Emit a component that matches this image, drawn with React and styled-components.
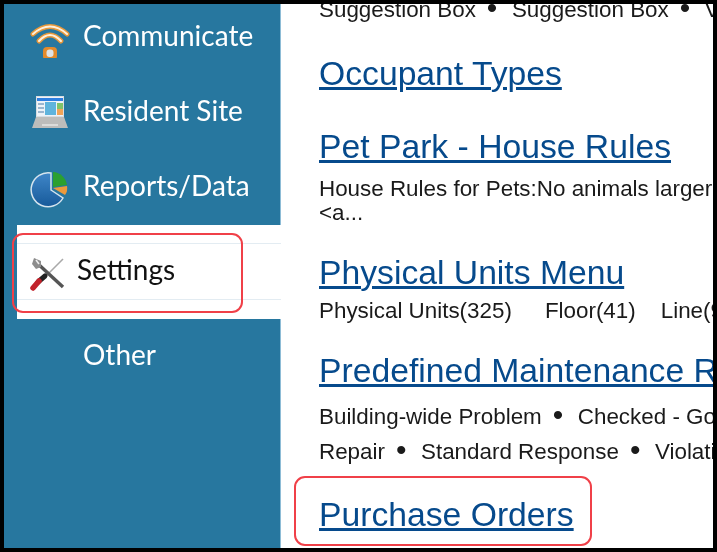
import React from 'react';
import styled, { createGlobalStyle } from 'styled-components';

const GlobalStyle = createGlobalStyle`
  html, body {
    margin: 0;
    padding: 0;
    background: #000;
  }
`;

const Frame = styled.div`
  width: 717px;
  height: 552px;
  box-sizing: border-box;
  padding: 4px;
  background: #000;
  overflow: hidden;
`;

const Screen = styled.div`
  position: relative;
  display: flex;
  height: 100%;
  overflow: hidden;
  background: #fff;
`;

const Sidebar = styled.nav`
  flex: 0 0 276px;
  background: #27779f;
  font-family: Lato, "Open Sans", sans-serif;
  position: relative;
  z-index: 1;
`;

const NavList = styled.div`
  display: flex;
  flex-direction: column;
  margin-top: -4px;
`;

const NavRow = styled.div`
  display: flex;
  align-items: center;
  height: 75px;
  padding-left: 26px;
  gap: 13px;
  color: #fff;
  font-size: 28px;
  filter: blur(0.4px);
`;

const NavLabel = styled.span`
  margin-bottom: 6px;
`;

const ActiveRow = styled.div`
  height: 94px;
  margin-left: 13px;
  margin-right: -1px;
  box-sizing: border-box;
  padding: 18px 0 19px;
  background: #fff;
`;

const ActiveInner = styled.div`
  display: flex;
  align-items: center;
  height: 100%;
  box-sizing: border-box;
  padding-left: 13px;
  gap: 7px;
  color: #111;
  font-size: 28px;
  border-top: 1px solid #e3ecf2;
  border-bottom: 1px solid #e3ecf2;
  filter: blur(0.4px);
`;

const IconBox = styled.svg`
  flex: 0 0 40px;
  width: 40px;
  height: 40px;
  margin-top: ${(p) => p.$shift || 0}px;
  filter: blur(0.6px);
`;

const Callout = styled.div`
  position: absolute;
  left: 8px;
  top: 229px;
  width: 231px;
  height: 80px;
  box-sizing: border-box;
  border: 2px solid #f04048;
  border-radius: 11px;
  z-index: 2;
`;

const Content = styled.main`
  flex: 1;
  min-width: 0;
  border-left: 1px solid #8dbcd6;
  padding-left: 38px;
  overflow: hidden;
  font-family: "Liberation Sans", Arial, sans-serif;
  color: #1a1a1a;
  filter: blur(0.4px);
`;

const Scroller = styled.div`
  margin-top: -7px;
`;

const Entry = styled.section`
  margin-bottom: ${(p) => p.$after || 0}px;
`;

const Title = styled.a`
  display: block;
  font-size: 33.7px;
  line-height: 40px;
  color: #064a8c;
  text-decoration: underline;
  text-decoration-thickness: 3px;
  white-space: nowrap;
`;

const Line = styled.div`
  margin-top: ${(p) => p.$top || 0}px;
  font-size: 22.4px;
  line-height: ${(p) => p.$height || 24}px;
  white-space: nowrap;
`;

const Dot = styled.span`
  margin: 0 14.5px 0 11px;
  font-size: 30px;
  line-height: 0;
  vertical-align: -1px;
`;

const Gap = styled.span`
  display: inline-block;
  width: ${(p) => p.$width}px;
`;

const HighlightedTitle = styled.div`
  display: inline-block;
  margin: 7.5px 0 0 -25px;
  padding: 16px 16px 10px 23px;
  border: 2px solid #f04048;
  border-radius: 11px;
`;

const WifiIcon = () => (
  <IconBox viewBox="0 0 40 40">
    <path d="M3 16 Q20 1 37 16" fill="none" stroke="#e8983a" strokeWidth="5" strokeLinecap="round" />
    <path d="M3 16 Q20 1 37 16" fill="none" stroke="#fdf0dc" strokeWidth="2" strokeLinecap="round" />
    <path d="M9 23 Q20 11 31 23" fill="none" stroke="#e8983a" strokeWidth="5" strokeLinecap="round" />
    <path d="M9 23 Q20 11 31 23" fill="none" stroke="#fdf0dc" strokeWidth="2" strokeLinecap="round" />
    <rect x="13" y="29" width="14" height="13" rx="4" fill="#e38a2b" />
    <rect x="16.5" y="31.5" width="7" height="7.5" rx="3" fill="#dfe3e6" />
  </IconBox>
);

const LaptopIcon = () => (
  <IconBox viewBox="0 0 40 40" $shift={-5}>
    <rect x="6" y="6" width="28" height="21" fill="#d8dde2" />
    <rect x="7" y="7" width="26" height="19" fill="#eef3f8" />
    <rect x="7" y="8" width="26" height="3" fill="#2f7fe0" />
    <rect x="15" y="12" width="11" height="13" fill="#5fb4dd" />
    <rect x="27" y="13" width="6" height="6" fill="#7fc46a" />
    <rect x="27" y="19" width="6" height="6" fill="#f0a458" />
    <rect x="8" y="13" width="6" height="2" fill="#9db7cf" />
    <rect x="8" y="17" width="6" height="2" fill="#9db7cf" />
    <rect x="8" y="21" width="6" height="2" fill="#9db7cf" />
    <path d="M6 27 L34 27 L38 38 L2 38 Z" fill="#bdbdbb" />
    <rect x="12" y="34" width="16" height="2" fill="#dcdcda" />
  </IconBox>
);

const PieIcon = () => (
  <IconBox viewBox="0 0 40 40" $shift={5}>
    <defs>
      <linearGradient id="pieBlue" x1="0" y1="0" x2="0" y2="1">
        <stop offset="0" stopColor="#3f86c8" />
        <stop offset="1" stopColor="#175a9a" />
      </linearGradient>
    </defs>
    <path d="M21 20 L33 28 A17 17 0 1 1 21 3 Z" fill="url(#pieBlue)" stroke="#d5e4ee" strokeWidth="1.5" />
    <path d="M23 17 L23 2 A15 15 0 0 1 37 15 Z" fill="#2ba02f" />
    <path d="M23 18 L37 16 Q38 21 35 25 Z" fill="#ec9a3c" />
  </IconBox>
);

const ToolsIcon = () => (
  <IconBox viewBox="0 0 40 40" $shift={7}>
    <path d="M33 4 L15 22" stroke="#a9a9a9" strokeWidth="1.6" />
    <path d="M7 8 L33 32" stroke="#555" strokeWidth="3.4" />
    <path d="M4 3 L11 6 L11 12 L6 14 L2 9 Z" fill="#8d8d8d" />
    <path d="M6 5 L9 9" stroke="#eee" strokeWidth="1.6" />
    <path d="M15 21 L8 27" stroke="#222" strokeWidth="5" strokeLinecap="round" />
    <path d="M9 26 L3 33" stroke="#c2222b" strokeWidth="5.5" strokeLinecap="round" />
  </IconBox>
);

export default function App() {
  return (
    <Frame>
      <GlobalStyle />
      <Screen>
        <Sidebar>
          <NavList>
            <NavRow><WifiIcon /><NavLabel>Communicate</NavLabel></NavRow>
            <NavRow><LaptopIcon /><NavLabel>Resident Site</NavLabel></NavRow>
            <NavRow><PieIcon /><NavLabel>Reports/Data</NavLabel></NavRow>
            <ActiveRow>
              <ActiveInner><ToolsIcon /><NavLabel>Settings</NavLabel></ActiveInner>
            </ActiveRow>
            <NavRow><IconBox viewBox="0 0 40 40" /><NavLabel>Other</NavLabel></NavRow>
          </NavList>
        </Sidebar>
        <Callout />
        <Content>
          <Scroller>
            <Entry $after={30}>
              <Line $height={26}>Suggestion Box<Dot>•</Dot>Suggestion Box<Dot>•</Dot>Violation</Line>
            </Entry>
            <Entry $after={33}>
              <Title>Occupant Types</Title>
            </Entry>
            <Entry $after={27}>
              <Title>Pet Park - House Rules</Title>
              <Line $top={11}>House Rules for Pets:No animals larger than 25 pounds</Line>
              <Line>&lt;a...</Line>
            </Entry>
            <Entry $after={27}>
              <Title>Physical Units Menu</Title>
              <Line $top={7}>Physical Units(325)<Gap $width={33} />Floor(41)<Gap $width={25} />Line(9)</Line>
            </Entry>
            <Entry>
              <Title>Predefined Maintenance Responses</Title>
              <Line $top={8.5} $height={35}>Building-wide Problem<Dot>•</Dot>Checked - Good</Line>
              <Line $height={35}>Repair<Dot>•</Dot>Standard Response<Dot>•</Dot>Violation</Line>
            </Entry>
            <HighlightedTitle>
              <Title>Purchase Orders</Title>
            </HighlightedTitle>
          </Scroller>
        </Content>
      </Screen>
    </Frame>
  );
}
